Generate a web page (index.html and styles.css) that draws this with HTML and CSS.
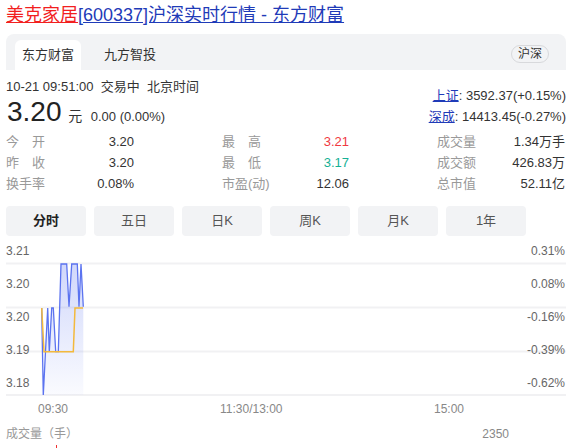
FILE: index.html
```html
<!DOCTYPE html>
<html lang="zh-CN">
<head>
<meta charset="utf-8">
<title>美克家居[600337]沪深实时行情 - 东方财富</title>
<link rel="stylesheet" href="styles.css">
</head>
<body>
<div class="page">
  <h1 class="title"><a class="name" href="#">美克家居</a><a class="rest" href="#">[600337]沪深实时行情 - 东方财富</a></h1>

  <div class="tabbar">
    <div class="tabs">
      <span class="tab active">东方财富</span>
      <span class="tab">九方智投</span>
    </div>
    <span class="badge">沪深</span>
  </div>

  <div class="quote">
    <div class="quote-left">
      <div class="time">10-21 09:51:00&nbsp;&nbsp;交易中&nbsp;&nbsp;北京时间</div>
      <div class="price-line"><span class="price">3.20</span> <span class="unit">元</span> <span class="change">0.00 (0.00%)</span></div>
    </div>
    <div class="quote-right">
      <div class="index"><a href="#">上证</a>: 3592.37(+0.15%)</div>
      <div class="index"><a href="#">深成</a>: 14413.45(-0.27%)</div>
    </div>
  </div>

  <div class="stats">
    <div class="cell"><span class="lab">今　开</span><span class="val">3.20</span></div>
    <div class="cell"><span class="lab">最　高</span><span class="val up">3.21</span></div>
    <div class="cell"><span class="lab">成交量</span><span class="val">1.34万手</span></div>
    <div class="cell"><span class="lab">昨　收</span><span class="val">3.20</span></div>
    <div class="cell"><span class="lab">最　低</span><span class="val down">3.17</span></div>
    <div class="cell"><span class="lab">成交额</span><span class="val">426.83万</span></div>
    <div class="cell"><span class="lab">换手率</span><span class="val">0.08%</span></div>
    <div class="cell"><span class="lab">市盈(动)</span><span class="val">12.06</span></div>
    <div class="cell"><span class="lab">总市值</span><span class="val">52.11亿</span></div>
  </div>

  <div class="periods">
    <span class="period active">分时</span>
    <span class="period">五日</span>
    <span class="period">日K</span>
    <span class="period">周K</span>
    <span class="period">月K</span>
    <span class="period">1年</span>
  </div>

  <div class="chart">
    <svg class="plot" width="560" height="180" viewBox="0 0 560 180">
      <defs>
        <linearGradient id="fill" x1="0" y1="24" x2="0" y2="155" gradientUnits="userSpaceOnUse">
          <stop offset="0" stop-color="#5b73f0" stop-opacity="0.28"/>
          <stop offset="1" stop-color="#5b73f0" stop-opacity="0.03"/>
        </linearGradient>
      </defs>
      <g stroke="#f1f1f3" stroke-width="2">
        <line x1="0" y1="23.5" x2="560" y2="23.5"/>
        <line x1="0" y1="67.5" x2="560" y2="67.5"/>
        <line x1="0" y1="111.5" x2="560" y2="111.5"/>
        <line x1="0" y1="155" x2="560" y2="155"/>
      </g>
      <polygon fill="url(#fill)" points="35.7,68 37.3,155 41.7,68 43.3,111.7 45.7,68 47.3,68 49.7,111.7 52.3,111.7 55,24 60.7,24 63,66.7 65.7,24 71.3,24 73,66.7 75,24 77.3,66.7 77.3,155 35.7,155"/>
      <polyline fill="none" stroke="#5b73f0" stroke-width="1.3" points="35.7,68 37.3,155 41.7,68 43.3,111.7 45.7,68 47.3,68 49.7,111.7 52.3,111.7 55,24 60.7,24 63,66.7 65.7,24 71.3,24 73,66.7 75,24 77.3,66.7"/>
      <polyline fill="none" stroke="#f3b93c" stroke-width="1.5" points="35.7,68 38,111.7 67.3,111.7 69,68 77,68"/>
    </svg>
    <span class="ylab l" style="top:4px">3.21</span>
    <span class="ylab l" style="top:37px">3.20</span>
    <span class="ylab l" style="top:70px">3.20</span>
    <span class="ylab l" style="top:103px">3.19</span>
    <span class="ylab l" style="top:136px">3.18</span>
    <span class="ylab r" style="top:4px">0.31%</span>
    <span class="ylab r" style="top:37px">0.08%</span>
    <span class="ylab r" style="top:70px">-0.16%</span>
    <span class="ylab r" style="top:103px">-0.39%</span>
    <span class="ylab r" style="top:136px">-0.62%</span>
    <span class="xlab" style="left:32px">09:30</span>
    <span class="xlab" style="left:214px">11:30/13:00</span>
    <span class="xlab" style="left:428px">15:00</span>
  </div>

  <div class="volume">
    <span class="vol-lab">成交量（手）</span>
    <span class="vol-val">2350</span>
  </div>
  <div class="vol-bar"></div>
</div>
</body>
</html>
```

FILE: styles.css
```css
* { box-sizing: border-box; }
html, body { margin: 0; padding: 0; background: #fff; }
body {
  font-family: "Liberation Sans", Arial, "Noto Sans CJK SC", sans-serif;
  color: #333;
  font-size: 13px;
}
.page {
  width: 581px;
  height: 448px;
  padding: 0 15px 0 6px;
  overflow: hidden;
}
.title {
  margin: 3px 0 0;
  font-size: 18px;
  font-weight: normal;
  line-height: 24px;
  white-space: nowrap;
}
.title a { text-decoration: underline; }
.title .name { color: #f21f1f; }
.title .rest { color: #1f3bb8; }

.tabbar {
  margin-top: 7px;
  height: 36px;
  background: #f2f3f5;
  border-radius: 8px 8px 0 0;
  display: flex;
  align-items: flex-end;
  justify-content: space-between;
  padding: 0 17px 0 9px;
}
.tabs { display: flex; gap: 16px; }
.tab {
  height: 30px;
  line-height: 30px;
  padding: 0 7px;
  font-size: 13px;
  color: #333;
  border-radius: 6px 6px 0 0;
}
.tab.active { background: #fff; }
.badge {
  align-self: center;
  margin-top: 4px;
  height: 18px;
  line-height: 16px;
  padding: 0 6px;
  font-size: 12px;
  color: #333;
  border: 1px solid #d8d9dc;
  border-radius: 9px;
}

.quote {
  margin-top: 8px;
  display: flex;
  justify-content: space-between;
  height: 50px;
}
.time { line-height: 18px; height: 18px; font-size: 13px; }
.price-line { line-height: 32px; height: 32px; white-space: nowrap; }
.price { font-size: 28px; color: #222; margin-left: 1px; }
.unit { font-size: 14px; line-height: 14px; margin-left: 3px; }
.change { font-size: 13px; line-height: 14px; margin-left: 5px; }
.quote-right { margin-top: 7px; text-align: right; }
.index { line-height: 21px; font-size: 13px; }
.index a { color: #1f3bb8; text-decoration: underline; }

.stats {
  margin-top: 3px;
  display: grid;
  grid-template-columns: 128px 127px 128px;
  column-gap: 88px;
}
.cell {
  display: flex;
  justify-content: space-between;
  line-height: 21px;
  height: 21px;
  font-size: 13px;
}
.lab { color: #999; }
.val { color: #333; }
.val.up { color: #f0393f; }
.val.down { color: #15b095; }

.periods {
  margin-top: 12px;
  display: flex;
  gap: 8px;
}
.period {
  width: 80px;
  height: 30px;
  line-height: 30px;
  text-align: center;
  background: #f2f3f5;
  border-radius: 4px;
  font-size: 13px;
  color: #555;
}
.period.active { color: #222; font-weight: bold; }

.chart {
  position: relative;
  margin-top: 4px;
  width: 560px;
  height: 180px;
}
.plot { position: absolute; left: 0; top: 0; display: block; }
.ylab {
  position: absolute;
  font-size: 12px;
  line-height: 14px;
  color: #666;
}
.ylab.l { left: 0; }
.ylab.r { right: 1px; }
.xlab {
  position: absolute;
  top: 162px;
  font-size: 12px;
  line-height: 14px;
  color: #888;
}

.volume {
  margin-top: 7px;
  width: 503px;
  display: flex;
  justify-content: space-between;
  font-size: 12px;
  line-height: 14px;
  height: 14px;
  color: #888;
}
.vol-lab { color: #999; }
.vol-bar {
  margin: 4px 0 0 50px;
  width: 1px;
  height: 4px;
  background: #f03030;
}
```
